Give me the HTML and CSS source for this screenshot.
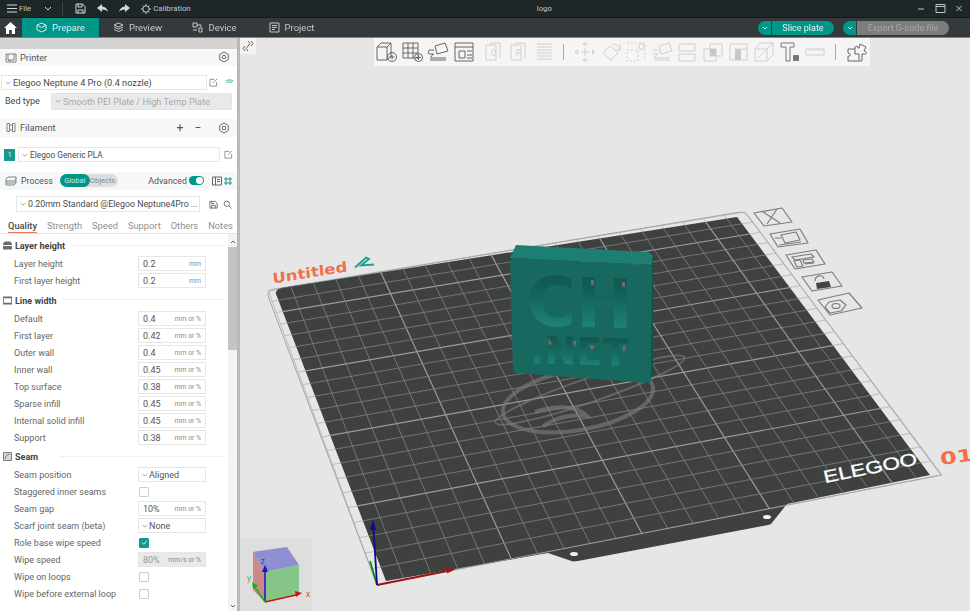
FILE: index.html
```html
<!DOCTYPE html>
<html lang="en">
<head>
<meta charset="utf-8">
<title>logo</title>
<link rel="stylesheet" href="styles.css">
</head>
<body>
<div class="app">
  <header class="titlebar">
    <svg class="ti menu-i" viewBox="0 0 10 9"><path d="M0 1h10M0 4.500h10M0 8h10"/></svg>
    <span class="tt file">File</span>
    <svg class="ti chev-i" viewBox="0 0 8 5"><path d="M1 1l3 3 3-3"/></svg>
    <i class="tsep"></i>
    <svg class="ti save-i" viewBox="0 0 11 11"><path d="M1 1h6.500L10 3.500V10H1zM3 1v3h4V1M3 10V7h5v3"/></svg>
    <svg class="ti undo-i" viewBox="0 0 11 9"><path class="fill" d="M5 0L0 4l5 4V5.500c2.500 0 4.500.7 6 2.500C10.500 5 8.500 2.800 5 2.500z"/></svg>
    <svg class="ti redo-i" viewBox="0 0 11 9"><path class="fill" d="M6 0l5 4-5 4V5.500C3.500 5.500 1.500 6.200 0 8c.5-3 2.500-5.200 6-5.500z"/></svg>
    <svg class="ti cal-i" viewBox="0 0 11 11"><circle cx="5.500" cy="5.500" r="3.500"/><path d="M5.500 0v2M5.500 9v2M0 5.500h2M9 5.500h2M1.700 1.700l1.200 1.200M8.100 8.100l1.200 1.200M1.700 9.300l1.200-1.200M8.100 2.900l1.200-1.200"/></svg>
    <span class="tt">Calibration</span>
    <span class="tt doc">logo</span>
    <svg class="ti win-i" viewBox="0 0 46 9"><path d="M0 5h6M18 .5h9v8h-9zM18 2.500h9M38.500 2l5 5M43.500 2l-5 5"/></svg>
  </header>

  <nav class="tabbar">
    <svg class="home-i" viewBox="0 0 13 12"><path d="M6.500 0L0 6h2v6h3.200V8h2.600v4H11V6h2z"/></svg>
    <a class="main-tab active">
      <svg viewBox="0 0 11 11"><path d="M5.500 1l4.500 2.200v4.600L5.500 10 1 7.800V3.200zM1 3.200l4.500 2.300L10 3.200"/></svg>Prepare
    </a>
    <a class="main-tab">
      <svg viewBox="0 0 11 11"><path d="M5.500 1L10 3 5.500 5 1 3zM1 5l4.500 2L10 5M1 7.500l4.500 2 4.500-2"/></svg>Preview
    </a>
    <a class="main-tab">
      <svg viewBox="0 0 11 11"><path d="M1 1h4v4H1zM7 6h3v4H7zM1 8h4M5 3h4v2"/></svg>Device
    </a>
    <a class="main-tab">
      <svg viewBox="0 0 11 11"><path d="M1 1h9v9H1zM3 3.500h5M3 5.500h5M3 7.500h3"/></svg>Project
    </a>
    <div class="actions">
      <div class="split"><span class="split-arrow"><svg viewBox="0 0 6 4"><path d="M1 1l2 2 2-2"/></svg></span><span class="split-main">Slice plate</span></div>
      <div class="split off"><span class="split-arrow"><svg viewBox="0 0 6 4"><path d="M1 1l2 2 2-2"/></svg></span><span class="split-main">Export G-code file</span></div>
    </div>
  </nav>

  <div class="main">
    <aside class="sidebar">
      <div class="band"></div>
      <div class="head h-printer">
        <svg class="hi" viewBox="0 0 12 11"><path d="M1 2h10v8H1zM3 2v6h6V2M3 8.500h3"/></svg>
        <span class="head-t">Printer</span>
        <svg class="gear" viewBox="0 0 12 12"><path d="M6 1l4.300 2.500v5L6 11 1.700 8.500v-5z"/><circle cx="6" cy="6" r="1.800"/></svg>
      </div>
      <div class="line printer-line">
        <div class="sel printer-sel"><svg class="dn" viewBox="0 0 6 4"><path d="M.5 1L3 3l2.500-2"/></svg>Elegoo Neptune 4 Pro (0.4 nozzle)</div>
        <svg class="edit" viewBox="0 0 10 10"><path d="M6 1.500H1v7.500h7.500V4.500M4.500 5.500L9 1"/></svg>
        <svg class="wifi" viewBox="0 0 10 8"><path d="M.5 2.500c2.500-2 6.500-2 9 0M2 4.200c1.600-1.200 4.400-1.200 6 0M5 6.800h.01"/></svg>
      </div>
      <div class="line bed-line">
        <span class="bed-l">Bed type</span>
        <div class="sel bed-sel"><svg class="dn" viewBox="0 0 6 4"><path d="M.5 1L3 3l2.500-2"/></svg>Smooth PEI Plate / High Temp Plate</div>
      </div>
      <div class="head h-filament">
        <svg class="hi" viewBox="0 0 12 11"><path d="M2 1.500h2.500v8H2zM7.500 1.500H10v8H7.500zM4.500 3h3M4.500 8h3"/></svg>
        <span class="head-t">Filament</span>
        <span class="pm pm-first">+</span><span class="pm">−</span>
        <svg class="gear" viewBox="0 0 12 12"><path d="M6 1l4.300 2.500v5L6 11 1.700 8.500v-5z"/><circle cx="6" cy="6" r="1.800"/></svg>
      </div>
      <div class="line fil-line">
        <span class="badge">1</span>
        <div class="sel fil-sel"><svg class="dn" viewBox="0 0 6 4"><path d="M.5 1L3 3l2.500-2"/></svg>Elegoo Generic PLA</div>
        <svg class="edit" viewBox="0 0 10 10"><path d="M6 1.500H1v7.500h7.500V4.500M4.500 5.500L9 1"/></svg>
      </div>
      <div class="head h-process">
        <svg class="hi" viewBox="0 0 12 11"><path d="M1 4l2-2h8v2l-2 2H1zM1 6v2h8l2-2V4M1 8v2h8l2-2V6"/></svg>
        <span class="head-t">Process</span>
        <div class="seg"><span class="seg-on">Global</span><span class="seg-off">Objects</span></div>
        <span class="adv">Advanced</span>
        <span class="toggle"></span>
        <svg class="proc-i" viewBox="0 0 10 10"><path d="M.5 1h9v8h-9zM3.500 1v8M5 3.500h3M5 5.500h3"/></svg>
        <svg class="proc-t" viewBox="0 0 8 8"><path d="M1 1h2v2H1zM5 1h2v2H5zM1 5h2v2H1zM5 5h2v2H5z"/></svg>
      </div>
      <div class="line preset-line">
        <div class="sel preset-sel"><svg class="dn" viewBox="0 0 6 4"><path d="M.5 1L3 3l2.500-2"/></svg>0.20mm Standard @Elegoo Neptune4Pro ...</div>
        <svg class="psave" viewBox="0 0 10 10"><path d="M1 1.500h6L9 3.500V9H1zM3 9V6h4v3M3 1.500V4h3"/></svg>
        <svg class="psearch" viewBox="0 0 10 10"><circle cx="4.200" cy="4.200" r="3"/><path d="M6.500 6.500L9.500 9.500"/></svg>
      </div>
      <div class="tabs">
        <span class="tab on">Quality</span><span class="tab">Strength</span><span class="tab">Speed</span><span class="tab">Support</span><span class="tab">Others</span><span class="tab">Notes</span>
      </div>
      <div class="scroll-area">
        <div class="params">
          <div class="sec"><svg viewBox="0 0 10 9"><path class="fill" d="M2 0h6l2 2.500V4H0V2.500zM0 5h10v4H0z"/></svg><b>Layer height</b></div>
          <div class="row"><label>Layer height</label><div class="inp">0.2<em>mm</em></div></div>
          <div class="row"><label>First layer height</label><div class="inp">0.2<em>mm</em></div></div>
          <div class="sec sec-tall"><svg viewBox="0 0 10 9"><path class="fill" d="M0 0h10v2H0zM0 7h10v2H0z"/><path d="M.5 2v5M9.500 2v5"/></svg><b>Line width</b></div>
          <div class="row"><label>Default</label><div class="inp">0.4<em>mm or %</em></div></div>
          <div class="row"><label>First layer</label><div class="inp">0.42<em>mm or %</em></div></div>
          <div class="row"><label>Outer wall</label><div class="inp">0.4<em>mm or %</em></div></div>
          <div class="row"><label>Inner wall</label><div class="inp">0.45<em>mm or %</em></div></div>
          <div class="row"><label>Top surface</label><div class="inp">0.38<em>mm or %</em></div></div>
          <div class="row"><label>Sparse infill</label><div class="inp">0.45<em>mm or %</em></div></div>
          <div class="row"><label>Internal solid infill</label><div class="inp">0.45<em>mm or %</em></div></div>
          <div class="row"><label>Support</label><div class="inp">0.38<em>mm or %</em></div></div>
          <div class="sec"><svg class="seam-i" viewBox="0 0 10 10"><path d="M.5.500h9v9h-9zM2.500 7.500c0-3 2-5 5-5"/></svg><b>Seam</b></div>
          <div class="row"><label>Seam position</label><div class="inp ddl"><svg class="dn" viewBox="0 0 6 4"><path d="M.5 1L3 3l2.500-2"/></svg>Aligned</div></div>
          <div class="row"><label>Staggered inner seams</label><span class="chk"></span></div>
          <div class="row"><label>Seam gap</label><div class="inp">10%<em>mm or %</em></div></div>
          <div class="row"><label>Scarf joint seam (beta)</label><div class="inp ddl"><svg class="dn" viewBox="0 0 6 4"><path d="M.5 1L3 3l2.500-2"/></svg>None</div></div>
          <div class="row"><label>Role base wipe speed</label><span class="chk on"><svg viewBox="0 0 8 6"><path d="M1 3l2 2 4-4"/></svg></span></div>
          <div class="row"><label>Wipe speed</label><div class="inp dis">80%<em>mm/s or %</em></div></div>
          <div class="row"><label>Wipe on loops</label><span class="chk"></span></div>
          <div class="row"><label>Wipe before external loop</label><span class="chk"></span></div>
        </div>
        <div class="scrollbar">
          <svg class="sc-a" viewBox="0 0 6 4"><path d="M1 3l2-2 2 2"/></svg>
          <div class="thumb"></div>
          <svg class="sc-b" viewBox="0 0 6 4"><path d="M1 1l2 2 2-2"/></svg>
        </div>
      </div>
    </aside>
    <div class="divider"></div>

    <section class="canvas">
      <svg class="scene" viewBox="240 38 730 573" id="scene">
        <defs>
          <linearGradient id="cut" x1="0" y1="0" x2="0" y2="1">
            <stop class="cut-a" offset="0"/>
            <stop class="cut-b" offset=".4"/>
            <stop class="cut-c" offset="1"/>
          </linearGradient>
        </defs>
        <g id="grid-under" class="g-under"></g>
        <g class="g-frame"><path d="M275 289.500L740 212q5-.5 9 5L941 475 377 585 268 296q-1-5 7-6.500z"/></g>
        <path class="plate" id="plate" d="M281 288L737 217l193 258-143 29-16 20-3 1-190 36-5 .5-25-8.500-162 28-110-287q-1-4 5-6z"/>
        <g id="grid-on" class="g-on"></g>
        <ellipse class="hole" cx="574" cy="554" rx="4" ry="2"/>
        <ellipse class="hole" cx="767" cy="517" rx="4" ry="2"/>

        <g class="logo-mark">
          <ellipse cx="578" cy="400" rx="76" ry="30" transform="rotate(-10 578 400)"/>
          <ellipse class="orbit" cx="590" cy="390" rx="100" ry="12" transform="rotate(-19 590 390)"/>
          <path d="M535 412c18-6 40-8 52 4-20-2-30 2-44 10"/>
        </g>

        <g class="bed-axes">
          <path class="ba-y" d="M377 585l-7-24"/>
          <path class="ba-x" d="M377 585l70-14"/><path class="ba-xh" d="M455 569.500l-9-3 1 7z"/>
          <path class="ba-z" d="M377 585l-3.500-57"/><path class="ba-zh" d="M373 520l-3 10h6z"/>
        </g>

        <text class="untitled" transform="matrix(1.17 -.19 .1 1 273 283.500)">Untitled</text>
        <path class="pen" d="M355 267.500l11-10 3 1.500-8 6.500 13-1"/>
        <text class="elegoo" transform="matrix(1.3 -.26 .24 1 825 483)">ELEGOO</text>
        <text class="num01" transform="matrix(1.4 -.2 .15 1 941 465)">01</text>

        <g class="plate-btn">
          <path d="M754 213l28-5 10 14-28 4zM770 234l30-5 8 14-30 4zM786 255l30-5 9 14-30 5zM802 277l30-5 10 14-30 5zM818 300l31-7 13 15-32 7z"/>
          <path d="M763 212l17 11M777 209l-10 15"/>
          <path d="M781 235l15-3 4 8-15 3zM775 238h6M779 245l22-3"/>
          <path d="M792 257l19-3 3 3-19 3zM794 261l6-1 3 6-6 1zM803 260l9-1 2 3-10 1zM805 264l9-1"/>
          <path d="M815 281c0-6 8-7 9-2"/>
          <path class="fill" d="M816 283l13-2 2 6-14 2z"/>
          <path d="M829 302l11-2 6 5-5 6-11 2-5-6z"/>
          <ellipse cx="836" cy="306" rx="4" ry="2.500"/>
        </g>

        <g class="model">
          <path class="m-top" d="M516 245l132 7 5 4-1 9-142-7z"/>
          <path class="m-side" d="M652 264l1-8v118l-4 9z"/>
          <path class="m-front" d="M514 258l135 7q3 1 3 3l-1 112q0 3-4 3l-130-10q-3 0-4-4l-3-107q0-4 4-4z"/>
          <text class="m-t1" transform="matrix(1 .03 0 1 526 325)">CH</text>
          <text class="m-t2" transform="matrix(1 .035 0 1 530 363)">.NET</text>
          <path class="m-hole" d="M591 280h3v5h-3zM622 282h3v5h-3zM549 338l3 6-4 1zM572 341l4 0v6zM589 345l6 1-3 5zM622 346h4l-2 8z"/>
        </g>
      </svg>

      <button class="collapse"><svg viewBox="0 0 12 12"><path d="M6 1l2 2.500L6 6M9 1l2 2.500L9 6M3 6L1 8.500 3 11M6 6L4 8.500 6 11"/></svg></button>

      <div class="toolbar">
        <svg class="tb" viewBox="0 0 22 22"><path d="M1 6l4-4h10v13l-4 4H1zM1 6h10v13M11 6l4-4"/><circle cx="16" cy="16" r="4.500"/><path d="M16 13.500v5M13.500 16h5"/></svg>
        <svg class="tb" viewBox="0 0 22 22"><path d="M1 2h15v15H1zM1 7h15M1 12h15M6 2v15M11 2v15"/><circle cx="16.500" cy="16.500" r="4"/><path d="M16.500 14v5M14 16.500h5"/></svg>
        <svg class="tb" viewBox="0 0 22 22"><path d="M8 5l10-3 3 8-11 3zM2 9h5M2 13h5M2 9L1 13M4 16l2-3M3 19h16M3 17h16"/></svg>
        <svg class="tb" viewBox="0 0 22 22"><path d="M2 2h18v18H2zM2 6h18M6 10h6v7H6zM14 10h5M14 14h5M14 17h5"/></svg>
        <svg class="tb dim gap-a" viewBox="0 0 22 22"><path d="M3 4h10v15H3zM7 2h10v15"/><text class="ico-t" x="10.500" y="15">0</text></svg>
        <svg class="tb dim" viewBox="0 0 22 22"><path d="M3 4h10v15H3zM7 2h10v15"/><text class="ico-t" x="10.500" y="15">P</text></svg>
        <svg class="tb dim" viewBox="0 0 22 22"><path d="M3 3h15M3 6h15M3 9h15M3 12h15M3 15h15M3 18h15"/></svg>
        <i class="tb-sep"></i>
        <svg class="tb dim" viewBox="0 0 22 22"><path d="M11 1l2 2.500h-4zM11 21l2-2.500h-4zM1 11l2.500-2v4zM21 11l-2.500-2v4zM7 11h8M11 7v8"/></svg>
        <svg class="tb dim" viewBox="0 0 22 22"><path d="M10 5l8 7-7 7-8-7zM12 3c4 0 7 2 8 6M20 3v6h-5"/></svg>
        <svg class="tb dim" viewBox="0 0 22 22"><path d="M2 9h11v11H2zM2 2h18v18" stroke-dasharray="2 2"/><path d="M14 3h5v5h-5z"/></svg>
        <svg class="tb dim" viewBox="0 0 22 22"><path d="M8 5l10-3 3 8-11 3zM2 9h5M2 13h5M4 16l2-3M3 19h16M3 17h16"/></svg>
        <svg class="tb dim" viewBox="0 0 22 22"><path d="M3 3h16v7H3zM3 13h16v7H3z"/></svg>
        <svg class="tb dim" viewBox="0 0 22 22"><path d="M8 3h12v12H8zM2 8h12v12H2z"/><path class="shade" d="M8 8h6v7H8z"/></svg>
        <svg class="tb dim" viewBox="0 0 22 22"><path d="M3 3h17v16H3z"/><path class="shade" d="M8 8h6v11H8z"/><path d="M8 8h12"/></svg>
        <svg class="tb dim" viewBox="0 0 22 22"><path d="M2 8l5-6h13v12l-6 6H2zM2 8h12v12M14 8l6-6M5 17L17 5"/></svg>
        <svg class="tb mid" viewBox="0 0 22 22"><path d="M2 2h13v4h-4v14H7V6H2z"/><rect class="solid" x="14" y="14" width="6" height="6" rx="1"/></svg>
        <svg class="tb dim" viewBox="0 0 22 22"><path d="M2 8h18v6H2zM5 8v2M8 8v2M11 8v2M14 8v2M17 8v2"/></svg>
        <i class="tb-sep tb-sep2"></i>
        <svg class="tb" viewBox="0 0 22 22"><path d="M2 8h7c-1-3 3-4 3-1h1l1-4 6 3-2 4c3 0 3 4 0 3l-2 0v7H2v-5c3 1 3-3 0-3zM9 8v5h4v6"/></svg>
      </div>

      <div class="gizmo">
        <svg viewBox="0 0 72 73">
          <path class="g-t" d="M13 14l34-5 12 18-34 7z"/>
          <path class="g-l" d="M13 14l12 20v30L13 52z"/>
          <path class="g-f" d="M25 34l34-7v30l-34 7z"/>
          <path class="ax-z" d="M25 64V34"/><path class="ax-zh" d="M25 27l-3 7h6z"/>
          <path class="ax-x" d="M25 64l31-7"/><path class="ax-xh" d="M62 55l-7-2 1 6z"/>
          <path class="ax-y" d="M25 64L14 48"/><path class="ax-yh" d="M12 44l1 7 5-3z"/>
          <text class="lb lb-z" x="21" y="26">z</text>
          <text class="lb lb-x" x="66" y="59">x</text>
          <text class="lb lb-y" x="7" y="43">y</text>
        </svg>
      </div>
    </section>
  </div>
</div>
<script src="grid.js"></script>
</body>
</html>
```
FILE: styles.css
```css
*{box-sizing:border-box}
html,body{margin:0;height:100%;overflow:hidden}
body{font-family:Roboto,"Liberation Sans",sans-serif;font-size:9px;color:#555}
svg{fill:none;stroke:currentColor;stroke-width:1;flex:none;display:block}
svg .fill{fill:currentColor;stroke:none}
.app{width:970px;height:611px;display:flex;flex-direction:column;filter:blur(.3px)}

.titlebar{height:18px;background:#1f2628;border-bottom:1px solid #14191a;display:flex;align-items:center;color:#c9cdcd;flex:none}
.tt{font-size:7.800px;color:#c2c6c6;white-space:nowrap}
.ti{color:#d4d7d7}
.menu-i{width:10px;height:9px;margin-left:7px}
.file{margin-left:2px}
.chev-i{width:8px;height:5px;margin-left:13px}
.tsep{width:1px;height:13px;background:#3d4548;margin-left:10px}
.save-i{width:11px;height:11px;margin-left:12px}
.undo-i{width:11px;height:9px;margin-left:11px}
.redo-i{width:11px;height:9px;margin-left:11px}
.cal-i{width:10px;height:10px;margin-left:11px;margin-right:2px}
.doc{flex:1;text-align:center;padding-right:20px}
.win-i{width:46px;height:9px;margin-right:6px;color:#c0c4c4}

.tabbar{height:20px;background:#33393c;display:flex;align-items:stretch;flex:none;position:relative;border-bottom:1px solid #7f8486}
.home-i{width:13px;height:12px;fill:#fff;stroke:none;margin:4px 5px 0 4px}
.main-tab{width:77px;display:flex;align-items:center;justify-content:center;gap:5px;color:#c4c8c8;font-size:9.500px}
.main-tab svg{width:11px;height:11px}
.main-tab.active{background:#009688;color:#d8f0ec}
.actions{margin-left:auto;display:flex;gap:9px;align-items:center;margin-right:21px}
.split{display:flex;height:14px;gap:1px;font-size:9px}
.split-arrow{width:13px;background:#009688;border-radius:7px 0 0 7px;display:flex;align-items:center;justify-content:center;color:#d8f0ec}
.split-arrow svg{width:6px;height:4px}
.split-main{background:#009688;color:#e2f4f1;width:62px;border-radius:0 7px 7px 0;display:flex;align-items:center;justify-content:center}
.off .split-main{background:#7d7d7d;color:#a8a8a8;width:92px}

.main{flex:1;display:flex;min-height:0}
.sidebar{width:237px;background:#fff;display:flex;flex-direction:column;flex:none;overflow:hidden}
.divider{width:3px;background:#b9b9b9;flex:none}
.band{height:11px;background:#d4d4d4;flex:none}

.head{display:flex;align-items:center;background:#f7f7f7;color:#555;font-size:9.200px;padding:0 7px 1px 5px;flex:none}
.hi{width:12px;height:11px;color:#7b8686}
.head-t{margin-left:3px}
.gear{width:12px;height:12px;margin-left:auto;color:#6a6a6a}
.h-printer{height:17px}
.h-filament{height:18px;margin-top:9px}
.h-filament .pm{font-size:12px;margin-left:8px;color:#555;line-height:1;width:10px;text-align:center}
.h-filament .pm-first{margin-left:auto}
.h-filament .gear{margin-left:15px}
.h-process{height:18px;margin-top:10px;padding-right:5px}
.h-process .head-t{margin-left:4px;font-size:8.800px}
.seg{margin-left:7px;width:58px;height:13px;border-radius:7px;background:#dedede;display:flex;align-items:center;font-size:7.500px}
.seg-on{width:30px;height:13px;border-radius:7px;background:#009688;color:#c9ece7;display:flex;align-items:center;justify-content:center}
.seg-off{color:#888}
.adv{margin-left:auto;color:#555;font-size:8.800px}
.toggle{width:15px;height:9px;margin-left:2px;border-radius:5px;background:#009688;position:relative}
.toggle::after{content:"";position:absolute;right:1px;top:1px;width:7px;height:7px;border-radius:50%;background:#fff}
.proc-i{width:10px;height:10px;margin-left:8px;color:#666}
.proc-t{width:8px;height:8px;margin-left:2px;color:#1f9c8e}

.line{display:flex;align-items:center;flex:none}
.sel{border:1px solid #e6e6e6;display:flex;align-items:center;background:#fff;white-space:nowrap;overflow:hidden;color:#4a4a4a}
.dn{width:6px;height:4px;color:#aaa;margin:0 2px 0 3px}
.printer-line{margin-top:9px;height:15px;padding-left:1px}
.printer-sel{width:206px;height:15px;font-size:9.200px}
.edit{width:9px;height:9px;color:#8a8a8a;margin-left:2px}
.printer-sel + .edit{margin-left:2px}
.wifi{width:9px;height:7px;color:#1da696;margin-left:7px}
.bed-line{margin-top:3px;height:17px;padding-left:5px}
.bed-l{width:46px;color:#444;font-size:9px;padding-bottom:1px}
.bed-sel{width:181px;height:17px;background:#e9e9e9;color:#aaa;font-size:9.200px;border-color:#e4e4e4;padding-bottom:1px}
.fil-line{margin-top:10px;height:15px;padding-left:4px}
.badge{width:11px;height:12px;background:#16998a;color:#cdeee9;font-size:7.500px;display:flex;align-items:center;justify-content:center}
.fil-sel{width:202px;height:15px;margin-left:3px;font-size:8.300px}
.fil-sel + .edit{margin-left:4px}
.preset-line{margin-top:6px;height:16px;padding-left:16px}
.preset-sel{width:184px;height:16px;font-size:8.800px}
.psave{width:9px;height:9px;margin-left:9px;color:#666}
.psearch{width:9px;height:9px;margin-left:5px;color:#666}

.tabs{height:16px;margin-top:6px;padding-left:8px;display:flex;border-bottom:1px solid #e3e3e3;flex:none;font-size:9.300px;color:#8f8f8f}
.tab{margin-right:10px;line-height:15px;height:15px;white-space:nowrap}
.tab.on{color:#4a4a4a;border-bottom:1px solid #ef7a52;font-weight:500}

.scroll-area{flex:1;min-height:0;display:flex;overflow:hidden}
.params{width:228px;flex:none;padding-top:1px}
.sec{height:20px;display:flex;align-items:center;padding:1px 0 0 3px;position:relative}
.sec-tall{height:21px;padding-top:2px}
.sec svg{width:9px;height:9px;color:#6a6a6a}
.sec svg.seam-i{fill:#d8d8d8}
.sec b{font-size:9px;font-weight:700;color:#444;margin-left:3px;background:#fff;padding-right:5px;position:relative;z-index:1}
.sec::after{content:"";position:absolute;left:60px;right:3px;top:10px;height:1px;background:#f0f0f0}
.row{height:17px;display:flex;align-items:center;padding-left:14px}
.row label{width:124px;color:#666;font-size:9px;white-space:nowrap}
.inp{width:68px;height:15px;border:1px solid #e6e6e6;display:flex;align-items:center;padding-left:4px;font-size:9px;color:#555;background:#fff}
.inp em{margin-left:auto;margin-right:4px;font-style:normal;font-size:6.800px;color:#8a8a8a}
.inp.dis{background:#e9e9e9;color:#999}
.ddl{padding-left:0}
.ddl .dn{margin:0 1px 0 3px}
.chk{width:10px;height:10px;border:1px solid #ccc;border-radius:1px;display:block;background:#fff;margin-left:1px}
.chk.on{background:#16998a;border-color:#16998a;display:flex;align-items:center;justify-content:center;color:#fff}
.chk.on svg{width:7px;height:5px}
.scrollbar{width:9px;display:flex;flex-direction:column;background:#f3f3f3;position:relative;align-items:center;flex:none}
.sc-a{width:6px;height:4px;margin-top:6px;color:#666}
.thumb{width:9px;height:103px;background:#c4c4c4;margin-top:3px}
.sc-b{width:6px;height:4px;margin-top:auto;margin-bottom:3px;color:#666}

.canvas{flex:1;position:relative;background:#e6e6e6;overflow:hidden;min-width:0}
.scene{position:absolute;left:0;top:0;width:730px;height:573px}
.g-under line{stroke:#b4b4b4;stroke-width:.8}
.g-frame path{stroke:#a4a4a4;stroke-width:1;fill:none}
.plate{fill:#3f4140;stroke:none}
.g-on line{stroke:#7a7c7b;stroke-width:.9}
.g-on line.major{stroke:#9a9c9b;stroke-width:1.200}
.hole{fill:#f2f2f2;stroke:none}
.logo-mark ellipse,.logo-mark path{stroke:#7d7f7e;stroke-width:4;fill:none;opacity:.6}
.logo-mark .orbit{stroke-width:2}
.bed-axes path{fill:none;stroke-width:1.800}
.ba-x{stroke:#a01414}
.ba-y{stroke:#128a12}
.ba-z{stroke:#0c0c84}
.bed-axes .ba-xh{fill:#a01414;stroke:none}
.bed-axes .ba-zh{fill:#0c0c84;stroke:none}
.untitled{font:700 14px "DejaVu Sans",sans-serif;fill:#f0704a;stroke:none}
.pen{stroke:#16a08f;stroke-width:1.800;fill:none}
.elegoo{font:400 17px "Liberation Sans",sans-serif;fill:#fff;stroke:#fff;stroke-width:.3}
.num01{font:700 17px "DejaVu Sans",sans-serif;fill:#f0704a;stroke:none}
.plate-btn path,.plate-btn ellipse{stroke:#7d7d7d;stroke-width:1.200;fill:none;stroke-linejoin:round}
.plate-btn .fill{fill:#444;stroke:none}
.m-top{fill:#1c7f72;stroke:none}
.m-side{fill:#125049;stroke:none}
.m-front{fill:#17695f;stroke:none}
.m-t1{font:700 68px "DejaVu Sans",sans-serif;fill:url(#cut);stroke:none}
.m-t2{font:700 38px "DejaVu Sans",sans-serif;fill:url(#cut);stroke:none}
.cut-a{stop-color:#0f4e47}
.cut-b{stop-color:#14635a}
.cut-c{stop-color:#22937f}
.m-hole{fill:#6e6a68;stroke:none}

.collapse{position:absolute;left:0;top:0;width:16px;height:16px;border:0;padding:2px;background:#f3f3f3;color:#666}
.collapse svg{width:12px;height:12px}
.toolbar{position:absolute;left:134px;top:0;width:496px;height:28px;background:#f5f5f5;display:flex;align-items:center;padding-left:2px;gap:3.600px}
.tb{width:22px;height:22px;color:#666;stroke-width:1}
.tb.dim{color:#cfcfcf}
.tb.mid{color:#777}
.gap-a{margin-left:4.400px}
.tb .shade{fill:#c8c8c8;stroke:none}
.tb .solid{fill:#777;stroke:none}
.ico-t{font:9px "Noto Sans",sans-serif;fill:#cfcfcf;stroke:none;text-anchor:middle}
.tb-sep{width:1px;height:16px;background:#aaa;margin:0 6.400px 0 3.400px;flex:none}
.tb-sep2{margin-left:5px}

.gizmo{position:absolute;left:0;bottom:0;width:72px;height:73px;background:#dedede}
.gizmo svg{width:72px;height:73px}
.g-t{fill:#8e8fd0;stroke:none}
.g-l{fill:#c98986;stroke:none}
.g-f{fill:#85c588;stroke:none}
.ax-z{stroke:#1414c8;stroke-width:1.500}.ax-zh{fill:#1414c8;stroke:none}
.ax-x{stroke:#c81414;stroke-width:1.500}.ax-xh{fill:#c81414;stroke:none}
.ax-y{stroke:#14b414;stroke-width:1.500}.ax-yh{fill:#14b414;stroke:none}
.lb{font:8px "Noto Sans",sans-serif;stroke:none}
.lb-z{fill:#3333cc}.lb-x{fill:#cc4444}.lb-y{fill:#44aa44}
```
FILE: grid.js
```js
(function () {
  // Perspective map of the build plate: unit square to the four on-screen corners.
  var q = [[268, 290], [745, 212], [942, 475], [377, 585]];
  var dx1 = q[1][0] - q[2][0], dx2 = q[3][0] - q[2][0], sx = q[0][0] - q[1][0] + q[2][0] - q[3][0];
  var dy1 = q[1][1] - q[2][1], dy2 = q[3][1] - q[2][1], sy = q[0][1] - q[1][1] + q[2][1] - q[3][1];
  var den = dx1 * dy2 - dx2 * dy1;
  var g = (sx * dy2 - dx2 * sy) / den, h = (dx1 * sy - sx * dy1) / den;
  var a = q[1][0] - q[0][0] + g * q[1][0], b = q[3][0] - q[0][0] + h * q[3][0], c = q[0][0];
  var d = q[1][1] - q[0][1] + g * q[1][1], e = q[3][1] - q[0][1] + h * q[3][1], f = q[0][1];
  function p(u, v) {
    var w = g * u + h * v + 1;
    return [(a * u + b * v + c) / w, (d * u + e * v + f) / w];
  }
  var NS = "http://www.w3.org/2000/svg", N = 22;
  var under = document.getElementById("grid-under"), on = document.getElementById("grid-on");
  var clip = document.createElementNS(NS, "clipPath");
  clip.id = "plate-clip";
  var cp = document.createElementNS(NS, "path");
  cp.setAttribute("d", document.getElementById("plate").getAttribute("d"));
  clip.appendChild(cp);
  document.getElementById("scene").appendChild(clip);
  on.setAttribute("clip-path", "url(#plate-clip)");
  function add(parent, s, t, major) {
    var l = document.createElementNS(NS, "line");
    l.setAttribute("x1", s[0]); l.setAttribute("y1", s[1]);
    l.setAttribute("x2", t[0]); l.setAttribute("y2", t[1]);
    if (major) l.setAttribute("class", "major");
    parent.appendChild(l);
  }
  for (var i = 0; i <= N; i++) {
    var k = i / N;
    [under, on].forEach(function (t) {
      add(t, p(k, 0), p(k, 1), i % 5 === 0);
      add(t, p(0, k), p(1, k), i % 5 === 2);
    });
  }
})();
```
